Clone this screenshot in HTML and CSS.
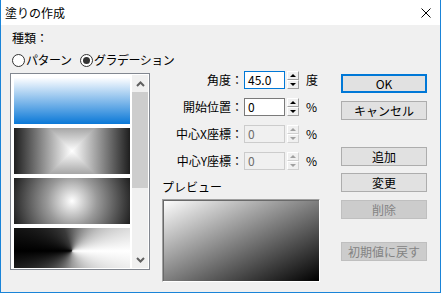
FILE: index.html
```html
<!DOCTYPE html>
<html lang="ja">
<head>
  <meta charset="UTF-8">
  <title>塗りの作成</title>
  <link rel="stylesheet" href="styles.css">
</head>
<body>

<div class="window">
  <div class="titlebar">
    <span class="title">塗りの作成</span>
    <svg class="close" width="10" height="10" viewBox="0 0 10 10">
      <path d="M0.5 0.5 L9.5 9.5 M9.5 0.5 L0.5 9.5" stroke="#000" stroke-width="1" fill="none"/>
    </svg>
  </div>

  <div class="content">
    <!-- left: type + list -->
    <div class="col-left">
      <div class="caption">種類：</div>
      <div class="radios">
        <label class="radio first"><span class="dot"></span>パターン</label>
        <label class="radio checked"><span class="dot"></span>グラデーション</label>
      </div>
      <div class="listbox">
        <div class="items">
          <div class="item grad-blue"></div>
          <div class="item grad-square"></div>
          <div class="item grad-radial"></div>
          <div class="item grad-conic"></div>
        </div>
        <div class="scrollbar">
          <div class="arrow">
            <svg width="9" height="6" viewBox="0 0 9 6"><path d="M1 5 L4.5 1.5 L8 5" stroke="#606060" stroke-width="2" fill="none"/></svg>
          </div>
          <div class="thumb"></div>
          <div class="track"></div>
          <div class="arrow">
            <svg width="9" height="6" viewBox="0 0 9 6"><path d="M1 1 L4.5 4.5 L8 1" stroke="#606060" stroke-width="2" fill="none"/></svg>
          </div>
        </div>
      </div>
    </div>

    <!-- middle: parameters + preview -->
    <div class="col-mid">
      <div class="row">
        <span class="row-label">角度：</span>
        <div class="field focus">45.0</div>
        <div class="spin"><span class="up"></span><span class="down"></span></div>
        <span class="unit">度</span>
      </div>
      <div class="row">
        <span class="row-label">開始位置：</span>
        <div class="field">0</div>
        <div class="spin"><span class="up"></span><span class="down"></span></div>
        <span class="unit">%</span>
      </div>
      <div class="row">
        <span class="row-label">中心X座標：</span>
        <div class="field disabled">0</div>
        <div class="spin disabled"><span class="up"></span><span class="down"></span></div>
        <span class="unit">%</span>
      </div>
      <div class="row">
        <span class="row-label">中心Y座標：</span>
        <div class="field disabled">0</div>
        <div class="spin disabled"><span class="up"></span><span class="down"></span></div>
        <span class="unit">%</span>
      </div>
      <div class="preview-label">プレビュー</div>
      <div class="preview"></div>
    </div>

    <!-- right: buttons -->
    <div class="col-right">
      <button class="btn default">OK</button>
      <button class="btn gap-s">キャンセル</button>
      <button class="btn gap-l">追加</button>
      <button class="btn gap-xs">変更</button>
      <button class="btn gap-s" disabled>削除</button>
      <button class="btn gap-m" disabled>初期値に戻す</button>
    </div>
  </div>
</div>

</body>
</html>
```

FILE: styles.css
```css
* {
  box-sizing: border-box;
}

body {
  margin: 0;
  font-family: "Noto Sans CJK JP", "Noto Sans", sans-serif;
  font-size: 12px;
  color: #000;
}

.window {
  width: 441px;
  height: 293px;
  border: 1px solid #1a84d8;
  border-top: none;
  background: #f0f0f0;
  display: flex;
  flex-direction: column;
}

.titlebar {
  height: 25px;
  flex: none;
  background: #fff;
  display: flex;
  align-items: center;
  padding-left: 4px;
}

.title {
  flex: 1;
  line-height: 16px;
}

.close {
  margin-right: 9px;
}

.content {
  flex: 1;
  display: flex;
  align-items: flex-start;
  padding-left: 9px;
}

/* left column */
.col-left {
  width: 140px;
  flex: none;
}

.caption {
  margin-top: 5px;
  height: 16px;
  line-height: 16px;
  padding-left: 2px;
}

.radios {
  margin-top: 6px;
  height: 16px;
  display: flex;
  align-items: center;
  padding-left: 2px;
  white-space: nowrap;
}

.radio {
  display: flex;
  align-items: center;
  gap: 1px;
  flex: none;
  line-height: 16px;
  letter-spacing: -0.5px;
}

.radio.first {
  width: 68px;
}

.dot {
  width: 13px;
  height: 13px;
  flex: none;
  border: 1px solid #333;
  border-radius: 50%;
  background: #fff;
  display: flex;
  align-items: center;
  justify-content: center;
}

.radio.checked .dot::after {
  content: "";
  width: 7px;
  height: 7px;
  border-radius: 50%;
  background: #333;
}

.listbox {
  margin-top: 5px;
  height: 197px;
  border: 1px solid #828790;
  background: #fff;
  padding: 1px;
  display: flex;
}

.items {
  flex: 1;
  padding: 3px 2px 0;
  overflow: hidden;
  display: flex;
  flex-direction: column;
  gap: 4px;
}

.item {
  height: 46px;
  flex: none;
}

.grad-blue {
  background: linear-gradient(to bottom, #fcfdff, #0a78d7);
}

.grad-square {
  background:
    linear-gradient(to right, #1e1e1e, #fff, #1e1e1e),
    linear-gradient(to bottom, #a6a6a6, #fff, #a6a6a6);
  background-blend-mode: darken;
}

.grad-radial {
  background: radial-gradient(circle farthest-corner at 50% 50%, #fff 0, #999 40%, #1e1e1e 100%);
}

.grad-conic {
  background: conic-gradient(from 90deg at 50% 50%, #fff 0deg, #9a9a9a 90deg, #000 180deg, #3a3a3a 250deg, #bdbdbd 320deg, #fff 360deg);
}

.scrollbar {
  width: 16px;
  flex: none;
  background: #f0f0f0;
  display: flex;
  flex-direction: column;
}

.arrow {
  height: 17px;
  flex: none;
  display: flex;
  align-items: center;
  justify-content: center;
}

.thumb {
  height: 96px;
  flex: none;
  background: #cdcdcd;
}

.track {
  flex: 1;
}

/* middle column */
.col-mid {
  width: 170px;
  flex: none;
  margin-top: 46px;
}

.row {
  display: flex;
  align-items: center;
  height: 18px;
  margin-bottom: 9px;
  white-space: nowrap;
}

.row-label {
  width: 94px;
  text-align: right;
  padding-right: 1px;
  line-height: 16px;
}

.field {
  width: 41px;
  height: 18px;
  border: 1px solid #7a7a7a;
  background: #fff;
  padding-left: 3px;
  line-height: 16px;
}

.field.focus {
  border-color: #0078d7;
}

.field.disabled {
  border-color: #cccccc;
  background: #f0f0f0;
  color: #6d6d6d;
}

.spin {
  width: 12px;
  height: 18px;
  margin-left: 2px;
  display: flex;
  flex-direction: column;
}

.spin span {
  flex: 1;
  background: #f0f0f0;
  border: 1px solid;
  border-color: #fff #a0a0a0 #a0a0a0 #fff;
  display: flex;
  align-items: center;
  justify-content: center;
}

.spin span::after {
  content: "";
  border-left: 3px solid transparent;
  border-right: 3px solid transparent;
}

.spin .up::after {
  border-bottom: 3px solid #000;
}

.spin .down::after {
  border-top: 3px solid #000;
}

.spin.disabled span {
  border-color: #fff #d0d0d0 #d0d0d0 #fff;
}

.spin.disabled .up::after {
  border-bottom-color: #a0a0a0;
}

.spin.disabled .down::after {
  border-top-color: #a0a0a0;
}

.unit {
  margin-left: 7px;
  line-height: 16px;
}

.preview-label {
  height: 16px;
  line-height: 16px;
  padding-left: 12px;
}

.preview {
  margin-top: 4px;
  margin-left: 12px;
  width: 158px;
  height: 83px;
  border: 1px solid;
  border-color: #a0a0a0 #fff #fff #a0a0a0;
  box-shadow: inset 1px 1px 0 #696969;
  background: linear-gradient(to bottom right, #fff, #000);
}

/* right column */
.col-right {
  width: 86px;
  flex: none;
  margin-left: 21px;
  margin-top: 49px;
  display: flex;
  flex-direction: column;
}

.btn {
  height: 19px;
  padding: 0;
  border: 1px solid #adadad;
  background: #e1e1e1;
  font-family: inherit;
  font-size: 12px;
  line-height: 16px;
  color: #000;
  white-space: nowrap;
}

.btn.default {
  border: 2px solid #0078d7;
}

.btn:disabled {
  background: #cccccc;
  border-color: #bfbfbf;
  color: #838383;
}

.gap-xs {
  margin-top: 7px;
}

.gap-s {
  margin-top: 8px;
}

.gap-m {
  margin-top: 23px;
}

.gap-l {
  margin-top: 27px;
}
```
